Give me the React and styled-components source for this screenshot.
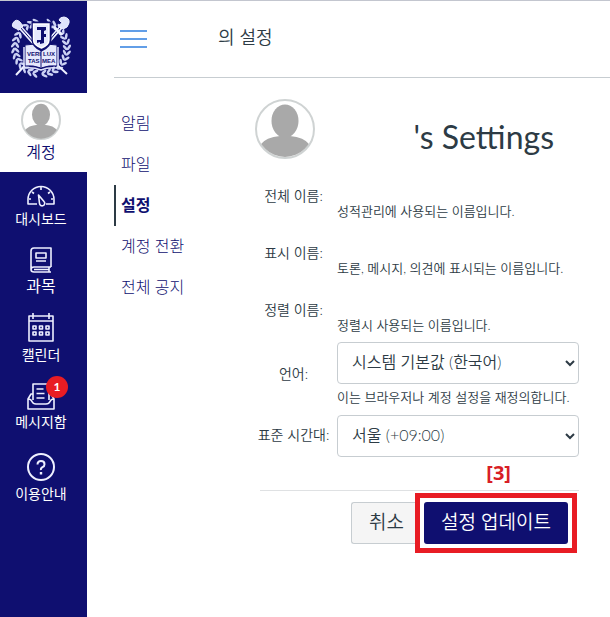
import React from "react";
import styled, { createGlobalStyle } from "styled-components";

const NAVY = "#0f0f70";
const INK = "#2d3b45";
const RED = "#e81c24";

const GlobalStyle = createGlobalStyle`
  * { box-sizing: border-box; }
  body {
    margin: 0;
    background: #fff;
    color: ${INK};
    font-family: Lato, "Noto Sans CJK KR", sans-serif;
    font-size: 16px;
    font-weight: 350;
  }
`;

const Page = styled.div`
  display: flex;
  min-height: 100vh;
  border-top: 1px solid #c3c6cf;
`;

const Sidebar = styled.nav`
  flex: 0 0 87px;
  background: ${NAVY};
`;

const CrestLink = styled.a`
  display: flex;
  justify-content: center;
  height: 92px;
  padding: 15px 5px 0 0;
`;

const SideList = styled.ul`
  list-style: none;
  margin: 0;
  padding: 0;
`;

const SideLink = styled.a`
  display: flex;
  flex-direction: column;
  align-items: center;
  padding-right: 5px;
  height: ${(p) => p.$height}px;
  padding-top: ${(p) => p.$top}px;
  background: ${(p) => (p.$active ? "#fff" : "transparent")};
  color: ${(p) => (p.$active ? NAVY : "#fff")};
  font-family: "Noto Sans CJK KR", sans-serif;
  font-size: ${(p) => (p.$large ? 16 : 14)}px;
  font-weight: ${(p) => (p.$active ? 350 : 400)};
  line-height: 22px;
  text-decoration: none;
`;

const IconSlot = styled.span`
  position: relative;
  display: flex;
  svg { display: block; }
`;

const Badge = styled.span`
  position: absolute;
  top: -7px;
  left: 19px;
  width: 22px;
  height: 22px;
  border-radius: 50%;
  background: ${RED};
  color: #fff;
  font: 700 12px/22px Lato, sans-serif;
  text-align: center;
`;

const Main = styled.div`
  flex: 1;
  min-width: 0;
  padding-left: 27px;
`;

const Header = styled.header`
  display: flex;
  align-items: center;
  height: 77px;
  padding: 0 0 0 6px;
  border-bottom: 1px solid #c7cdd1;
`;

const MenuButton = styled.button`
  display: flex;
  padding: 0;
  margin-right: 71px;
  border: 0;
  background: none;
  cursor: pointer;
`;

const Crumb = styled.span`
  padding-bottom: 4px;
  font-size: 18px;
  line-height: 24px;
`;

const Columns = styled.div`
  display: flex;
`;

const SubNav = styled.nav`
  flex: 0 0 136px;
  padding-top: 25px;
`;

const SubLink = styled.a`
  display: block;
  height: 41px;
  padding-left: 5px;
  border-left: 2px solid ${(p) => (p.$active ? INK : "transparent")};
  color: ${NAVY};
  font-weight: ${(p) => (p.$active ? 700 : 300)};
  line-height: 40px;
  text-decoration: none;
`;

const Content = styled.main`
  flex: 1;
  min-width: 0;
  padding: 21px 31px 20px 0;
`;

const Profile = styled.div`
  display: flex;
  align-items: center;
  justify-content: space-between;
  height: 60px;
  padding: 0 25px 0 5px;
`;

const Title = styled.h1`
  margin: 0;
  padding-top: 15px;
  font: 400 32px/40px Lato, sans-serif;
`;

const Field = styled.div`
  display: grid;
  grid-template-columns: 87px 1fr;
  min-height: ${(p) => p.$height}px;
  align-items: start;
`;

const Label = styled.label`
  padding-top: ${(p) => p.$top}px;
  font-size: 14px;
  line-height: 20px;
  text-align: center;
  white-space: nowrap;
`;

const Hint = styled.div`
  padding-top: ${(p) => p.$top}px;
  font-size: 13px;
  line-height: 20px;
  white-space: nowrap;
`;

const Names = styled.div`
  display: grid;
  row-gap: 22px;
  padding: 27px 0 7px;
`;

const Select = styled.select`
  display: block;
  width: 100%;
  height: 42px;
  padding: 0 0 3px 10px;
  border: 1px solid #c7cdd1;
  border-radius: 4px;
  background: #fff;
  color: ${INK};
  font: inherit;
`;

const Footer = styled.div`
  position: relative;
  display: flex;
  justify-content: flex-end;
  margin: 33px 0 0 10px;
  padding: 2px 2px 0 0;
  border-top: 1px solid #dfe1e3;
`;

const StepMark = styled.span`
  position: absolute;
  right: 68px;
  top: -30px;
  color: #d81e26;
  font: 700 20px/24px "Open Sans", sans-serif;
`;

const Cancel = styled.button`
  height: 42px;
  margin-top: 9px;
  padding: 0 11px 5px 17px;
  border: 1px solid #c7cdd1;
  border-right: 0;
  border-radius: 3px 0 0 3px;
  background: #f5f5f5;
  color: ${INK};
  font: inherit;
  font-size: 19px;
`;

const Highlight = styled.div`
  padding: 4px;
  border: 5px solid ${RED};
  background: #fff;
`;

const Submit = styled.button`
  display: block;
  height: 42px;
  padding: 0 17px 5px;
  border: 0;
  border-radius: 3px;
  background: ${NAVY};
  color: #fff;
  font: inherit;
  font-size: 19px;
`;

const wreath = Array.from({ length: 28 }, (_, i) => {
  const side = i < 14 ? -1 : 1;
  const deg = (i % 14) * 12 + 14;
  const a = (deg * Math.PI) / 180;
  return {
    x: 31 + side * Math.sin(a) * 26,
    y: 32 - Math.cos(a) * 26,
    r: side * deg,
  };
});

const Crest = () => (
  <svg width="62" height="62" viewBox="0 0 62 62" role="img" aria-label="VERI LUX TAS MEA">
    {wreath.map((l, i) => (
      <g key={i} transform={`translate(${l.x} ${l.y}) rotate(${l.r})`} fill="#ccd2f4">
        <ellipse cx="0" cy="-2.300" rx="3.200" ry="1.300" transform="rotate(35)" />
        <ellipse cx="0" cy="2.300" rx="3.200" ry="1.300" transform="rotate(-35)" />
      </g>
    ))}
    <g stroke="#eef0ff" fill="none">
      <path d="M8 9L24 27M52 10L38 26" strokeWidth="6" stroke={NAVY} />
      <path d="M8 9L24 27M52 10L38 26" strokeWidth="4" />
      <path d="M18 46L6 59M44 46L57 58" strokeWidth="2" />
      <path d="M10 11L24 27M50 12L38 26" strokeWidth="1" stroke={NAVY} />
      <path d="M44 11l8 8" strokeWidth="3" />
      <path d="M48 10l5-4q-1 2-4-2q1-3 5-3q6 1 5 6q-1 5-6 6z" fill="#dfe3fb" />
      <path d="M3 7q3-5 7-1l3 4-4 4-4-2q-4-1-2-5z" fill="#dfe3fb" />
    </g>
    <path d="M15 29q8-2 16 1q8-3 16-1v21q-8-1-16 2q-8-3-16-2z" fill="#e6e9fd" stroke={NAVY} />
    <path d="M14 31v21q10-1 17 2q7-3 17-2V31" fill="none" stroke="#dfe3fb" strokeWidth="1.500" />
    <path d="M31 30v21" stroke={NAVY} strokeWidth="1" />
    <g fill={NAVY} fontFamily="Liberation Sans" fontSize="6" fontWeight="700">
      <text x="17" y="40">VERI</text>
      <text x="33" y="40">LUX</text>
      <text x="18" y="47">TAS</text>
      <text x="32" y="47">MEA</text>
    </g>
    <path d="M23 7h17v17q0 6-8.500 10q-8.500-4-8.500-10z" fill={NAVY} stroke={NAVY} strokeWidth="3" />
    <path d="M23.500 8h15.500v16q0 5-7.500 8q-8-3-8-8z" fill="#e6e9fd" stroke="#fff" strokeWidth="1.400" />
    <path d="M27 11h9v3l-2 1v3h2v3h-2v6l-4 1v-2l-3 1v-3h4V14h-4z" fill={NAVY} />
  </svg>
);

const Avatar = ({ size, ring }) => (
  <svg width={size} height={size} viewBox="0 0 60 60" aria-hidden="true">
    <defs>
      <clipPath id={`face${size}`}><circle cx="30" cy="30" r="28" /></clipPath>
    </defs>
    <circle cx="30" cy="30" r={30 - ring / 2} fill="#fff" stroke="#cfd3d3" strokeWidth={ring} />
    <g clipPath={`url(#face${size})`} fill="#a9a9a9">
      <ellipse cx="30" cy="22" rx="13.500" ry="16.500" />
      <path d="M25 34h10v3q14 1 20 9v14H5V46q6-8 20-9z" />
    </g>
  </svg>
);

const Line = ({ w, h, children, sw = 1.6 }) => (
  <svg width={w} height={h} viewBox={`0 0 ${w} ${h}`} fill="none" stroke="#eef0ff" strokeWidth={sw} strokeLinejoin="round" aria-hidden="true">
    {children}
  </svg>
);

const DashboardIcon = () => (
  <Line w={28} h={22}>
    <path d="M10 19H1v-4.500a13 13 0 0 1 26 0V19h-8" />
    <path d="M14 2v3M5 7l2 1.500M23 7l-2 1.500M2 14h2M24 14h2" />
    <path d="M11.500 10l5.500 6.500a2.600 2.600 0 1 1-4.500 2z" />
  </Line>
);

const BookIcon = () => (
  <Line w={24} h={27}>
    <path d="M22 20V1H5Q2 1 2 4v18M22 20H5q-3 0-3 2.500T5 25h17M20 20v5M5 22.500h15" />
    <path d="M7 6h10v5H7zM7 14h10" />
  </Line>
);

const CalendarIcon = () => (
  <Line w={26} h={30}>
    <path d="M1 3h24v25H1zM5 0v6M21 0v6M1 8h24" />
    <path d="M5 13h3v3H5zM11.500 13h3v3h-3zM18 13h3v3h-3zM5 19h3v3H5zM11.500 19h3v3h-3zM18 19h3v3h-3z" />
  </Line>
);

const InboxIcon = () => (
  <Line w={28} h={27}>
    <path d="M6 17V1h16v16M9.500 6h7M9.500 10.500h8M9.500 15h8" />
    <path d="M6 11H4l-3 5v10h26V16l-3-5h-2M1 16q3 0 4 2.500T9 21h10q3 0 4-2.500T27 16" />
  </Line>
);

const HelpIcon = () => (
  <Line w={30} h={30} sw={2}>
    <circle cx="15" cy="15" r="13" />
    <path d="M11.500 12.500q0-3.500 3.500-3.500t3.500 3.200q0 2-2 3T15 18" />
    <path d="M15 20v2.500" strokeWidth="2.400" />
  </Line>
);

const sideItems = [
  { text: "계정", icon: <Avatar size={40} ring={3} />, height: 79, top: 7, active: true, large: true },
  { text: "대시보드", icon: <DashboardIcon />, height: 71, top: 13 },
  { text: "과목", icon: <BookIcon />, height: 69, top: 4, large: true },
  { text: "캘린더", icon: <CalendarIcon />, height: 65, top: 1 },
  { text: "메시지함", icon: <InboxIcon />, height: 73, top: 6, count: 1 },
  { text: "이용안내", icon: <HelpIcon />, height: 60, top: 2 },
];

const subItems = ["알림", "파일", "설정", "계정 전환", "전체 공지"];

const nameFields = [
  { label: "전체 이름:", hint: "성적관리에 사용되는 이름입니다." },
  { label: "표시 이름:", hint: "토론, 메시지, 의견에 표시되는 이름입니다." },
  { label: "정렬 이름:", hint: "정렬시 사용되는 이름입니다." },
];

export default function App() {
  return (
    <>
      <GlobalStyle />
      <Page>
        <Sidebar>
          <CrestLink href="#home"><Crest /></CrestLink>
          <SideList>
            {sideItems.map((s) => (
              <li key={s.text}>
                <SideLink href="#" $height={s.height} $top={s.top} $active={s.active} $large={s.large}>
                  <IconSlot>
                    {s.icon}
                    {s.count && <Badge>{s.count}</Badge>}
                  </IconSlot>
                  {s.text}
                </SideLink>
              </li>
            ))}
          </SideList>
        </Sidebar>
        <Main>
          <Header>
            <MenuButton type="button" aria-label="메뉴">
              <svg width="27" height="18" viewBox="0 0 27 18" stroke="#2f7fe0" strokeWidth="1.700">
                <path d="M0 1h27M0 9h27M0 17h27" />
              </svg>
            </MenuButton>
            <Crumb>의 설정</Crumb>
          </Header>
          <Columns>
            <SubNav>
              {subItems.map((t) => (
                <SubLink key={t} href="#" $active={t === "설정"}>{t}</SubLink>
              ))}
            </SubNav>
            <Content>
              <Profile>
                <Avatar size={60} ring={2} />
                <Title>'s Settings</Title>
              </Profile>
              <form onSubmit={(e) => e.preventDefault()}>
                <Names>
                  {nameFields.map((f) => (
                    <Field key={f.label} $height={35}>
                      <Label as="span">{f.label}</Label>
                      <Hint $top={15}>{f.hint}</Hint>
                    </Field>
                  ))}
                </Names>
                <Field $height={73}>
                  <Label htmlFor="language" $top={22}>언어:</Label>
                  <div>
                    <Select id="language"><option>시스템 기본값 (한국어)</option></Select>
                    <Hint $top={3}>이는 브라우저나 계정 설정을 재정의합니다.</Hint>
                  </div>
                </Field>
                <Field $height={42}>
                  <Label htmlFor="timezone" $top={10}>표준 시간대:</Label>
                  <Select id="timezone"><option>서울 (+09:00)</option></Select>
                </Field>
                <Footer>
                  <StepMark>[3]</StepMark>
                  <Cancel type="button">취소</Cancel>
                  <Highlight><Submit type="submit">설정 업데이트</Submit></Highlight>
                </Footer>
              </form>
            </Content>
          </Columns>
        </Main>
      </Page>
    </>
  );
}
